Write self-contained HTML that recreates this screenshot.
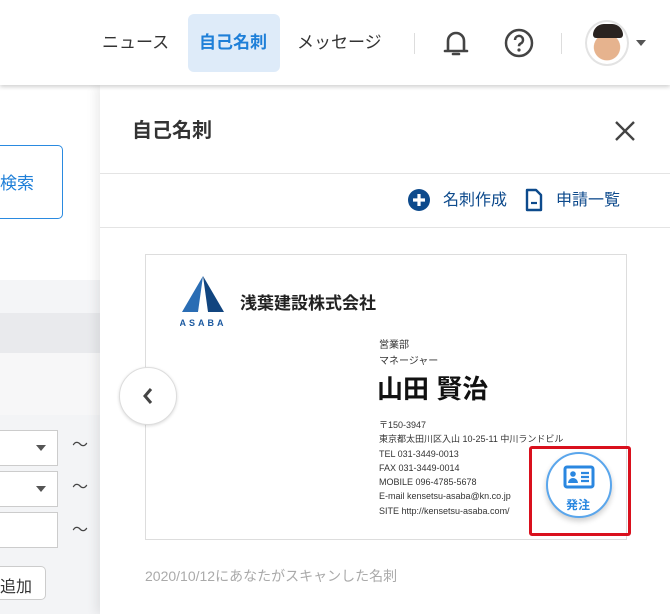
<!DOCTYPE html>
<html><head><meta charset="utf-8"><style>
*{margin:0;padding:0;box-sizing:border-box}
body{width:670px;height:614px;overflow:hidden;background:#fff;font-family:"Liberation Sans","Noto Sans CJK JP",sans-serif;position:relative;color:#333}
.abs{position:absolute}
.hdr{left:0;top:0;width:670px;height:85px;background:#fff;box-shadow:0 2px 4px rgba(0,0,0,.18);z-index:5}
.nav{font-size:17px;color:#333;top:28px}
.panel{left:100px;top:85px;width:570px;height:529px;background:#fff;box-shadow:-4px 0 10px rgba(0,0,0,.08);z-index:3}
.card{left:45px;top:169px;width:482px;height:286px;border:1px solid #ddd;background:#fff}
.sm{font-size:9px;color:#333;line-height:14.3px}
</style></head><body>
<div class="abs hdr">
  <div class="abs nav" style="left:102px">ニュース</div>
  <div class="abs" style="left:188px;top:14px;width:92px;height:58px;background:#deebf9;border-radius:6px"></div>
  <div class="abs nav" style="left:199px;color:#1e7fd8;font-weight:bold">自己名刺</div>
  <div class="abs nav" style="left:297px">メッセージ</div>
  <div class="abs" style="left:414px;top:33px;width:1px;height:21px;background:#ddd"></div>
  <svg class="abs" style="left:440px;top:27px" width="32" height="32" viewBox="0 0 32 32"><path d="M8 24V14a8 8 0 0 1 16 0v10M5 24h22M13 27h6" fill="none" stroke="#444" stroke-width="2.6" stroke-linecap="round"/></svg>
  <svg class="abs" style="left:503px;top:27px" width="32" height="32" viewBox="0 0 32 32"><circle cx="16" cy="16" r="13" fill="none" stroke="#444" stroke-width="2.5"/><path d="M12 13a4 4 0 1 1 5.5 3.6c-1.2.6-1.5 1.2-1.5 2.6" fill="none" stroke="#444" stroke-width="2.5"/><circle cx="16" cy="23" r="1.6" fill="#444"/></svg>
  <div class="abs" style="left:561px;top:33px;width:1px;height:21px;background:#ddd"></div>
  <div class="abs" style="left:585px;top:20px;width:44px;height:46px;border-radius:50%;border:2px solid #e3e3e3;background:radial-gradient(circle at 50% 60%,#e6b38e 0 40%,#fff 42%);overflow:hidden"><div style="position:absolute;left:6px;top:2px;width:30px;height:14px;background:#2a2320;border-radius:14px 14px 4px 4px"></div></div>
  <div class="abs" style="left:636px;top:40px;border:5px solid transparent;border-top:6px solid #555"></div>
</div>
<div class="abs" style="left:0;top:145px;width:63px;height:74px;border:1px solid #2a8ae0;border-left:none;border-radius:0 5px 5px 0"></div>
<div class="abs" style="left:0;top:169px;font-size:17px;color:#1e7fd8">検索</div>
<div class="abs" style="left:0;top:280px;width:100px;height:34px;background:#f4f5f7"></div>
<div class="abs" style="left:0;top:313px;width:100px;height:40px;background:#e9eaed"></div>
<div class="abs" style="left:0;top:353px;width:100px;height:62px;background:#f7f7f8"></div>
<div class="abs" style="left:0;top:415px;width:100px;height:199px;background:#f3f4f6"></div>
<div class="abs" style="left:0;top:430px;width:58px;height:36px;background:#fff;border:1px solid #ccc;border-left:none"></div>
<div class="abs" style="left:0;top:471px;width:58px;height:36px;background:#fff;border:1px solid #ccc;border-left:none"></div>
<div class="abs" style="left:0;top:512px;width:58px;height:36px;background:#fff;border:1px solid #ccc;border-left:none"></div>
<div class="abs" style="left:36px;top:445px;border:5px solid transparent;border-top:6px solid #555"></div>
<div class="abs" style="left:36px;top:486px;border:5px solid transparent;border-top:6px solid #555"></div>
<div class="abs" style="left:72px;top:431px;font-size:16px;color:#444">～</div>
<div class="abs" style="left:72px;top:473px;font-size:16px;color:#444">～</div>
<div class="abs" style="left:72px;top:516px;font-size:16px;color:#444">～</div>
<div class="abs" style="left:0;top:566px;width:46px;height:34px;background:#fff;border:1px solid #ccc;border-left:none;border-radius:0 5px 5px 0;font-size:16px;padding:6px 0 0 0">追加</div>
<div class="abs panel">
  <div class="abs" style="left:32px;top:29px;font-size:20px;font-weight:bold;color:#333">自己名刺</div>
  <svg class="abs" style="left:514px;top:35px" width="22" height="22" viewBox="0 0 22 22"><path d="M2 2L20 20M20 2L2 20" stroke="#444" stroke-width="2.4"/></svg>
  <div class="abs" style="left:0;top:88px;width:570px;height:1px;background:#e4e4e4"></div>
  <svg class="abs" style="left:308px;top:104px" width="22" height="22" viewBox="0 0 22 22"><circle cx="11" cy="11" r="11" fill="#0d4a8c"/><path d="M11 5v12M5 11h12" stroke="#fff" stroke-width="3.2"/></svg>
  <div class="abs" style="left:343px;top:101px;font-size:16px;color:#0d4a8c">名刺作成</div>
  <svg class="abs" style="left:424px;top:103px" width="20" height="24" viewBox="0 0 20 24"><path d="M3 2h9l5 5v15H3z" fill="none" stroke="#0d4a8c" stroke-width="2.4" stroke-linejoin="round"/><path d="M7 15h6" stroke="#0d4a8c" stroke-width="2.2"/></svg>
  <div class="abs" style="left:456px;top:101px;font-size:16px;color:#0d4a8c">申請一覧</div>
  <div class="abs" style="left:0;top:142px;width:570px;height:1px;background:#e4e4e4"></div>
  <div class="abs card">
    <svg class="abs" style="left:34px;top:21px" width="46" height="52" viewBox="0 0 46 52"><path d="M23 0L2 36h16z" fill="#2a6db4"/><path d="M23 0L44 36H28z" fill="#11457f"/><path d="M18 36L23 26 28 36z" fill="#fff"/><text x="23" y="50" font-size="9" font-weight="bold" fill="#1c5aa0" text-anchor="middle" letter-spacing="3" font-family="Liberation Sans">ASABA</text></svg>
    <div class="abs" style="left:94px;top:34px;font-size:17px;font-weight:bold;color:#222">浅葉建設株式会社</div>
    <div class="abs sm" style="left:233px;top:83px;font-size:10px;line-height:16px">営業部<br>マネージャー</div>
    <div class="abs" style="left:231px;top:114px;font-size:26px;font-weight:bold;color:#111">山田 賢治</div>
    <div class="abs sm" style="left:233px;top:163px">〒150-3947<br>東京都太田川区入山 10-25-11 中川ランドビル<br>TEL 031-3449-0013<br>FAX 031-3449-0014<br>MOBILE 096-4785-5678<br>E-mail kensetsu-asaba@kn.co.jp<br>SITE http://kensetsu-asaba.com/</div>
  </div>
  <div class="abs" style="left:19px;top:282px;width:58px;height:58px;border-radius:50%;background:#fff;border:1px solid #ddd;box-shadow:0 1px 3px rgba(0,0,0,.15)"></div>
  <svg class="abs" style="left:40px;top:301px" width="16" height="20" viewBox="0 0 16 20"><path d="M11 3L5 10l6 7" fill="none" stroke="#444" stroke-width="3"/></svg>
  <div class="abs" style="left:429px;top:361px;width:102px;height:90px;border:3px solid #d9101d;border-radius:3px"></div>
  <div class="abs" style="left:446px;top:367px;width:66px;height:66px;border-radius:50%;background:#fff;border:2px solid #5aa6ec;box-shadow:0 3px 6px rgba(0,0,0,.2)"></div>
  <svg class="abs" style="left:463px;top:380px" width="32" height="26" viewBox="0 0 32 26"><rect x="2" y="2" width="28" height="20" rx="2" fill="none" stroke="#2a87e0" stroke-width="3"/><circle cx="10" cy="9" r="2.8" fill="#2a87e0"/><path d="M5 18a5 5 0 0 1 10 0z" fill="#2a87e0"/><path d="M18 8h8M18 12h8M18 16h8" stroke="#2a87e0" stroke-width="2.2"/></svg>
  <div class="abs" style="left:466px;top:411px;font-size:12px;font-weight:bold;color:#2a87e0">発注</div>
  <div class="abs" style="left:45px;top:481px;font-size:14px;color:#aaa">2020/10/12にあなたがスキャンした名刺</div>
</div>
</body></html>
